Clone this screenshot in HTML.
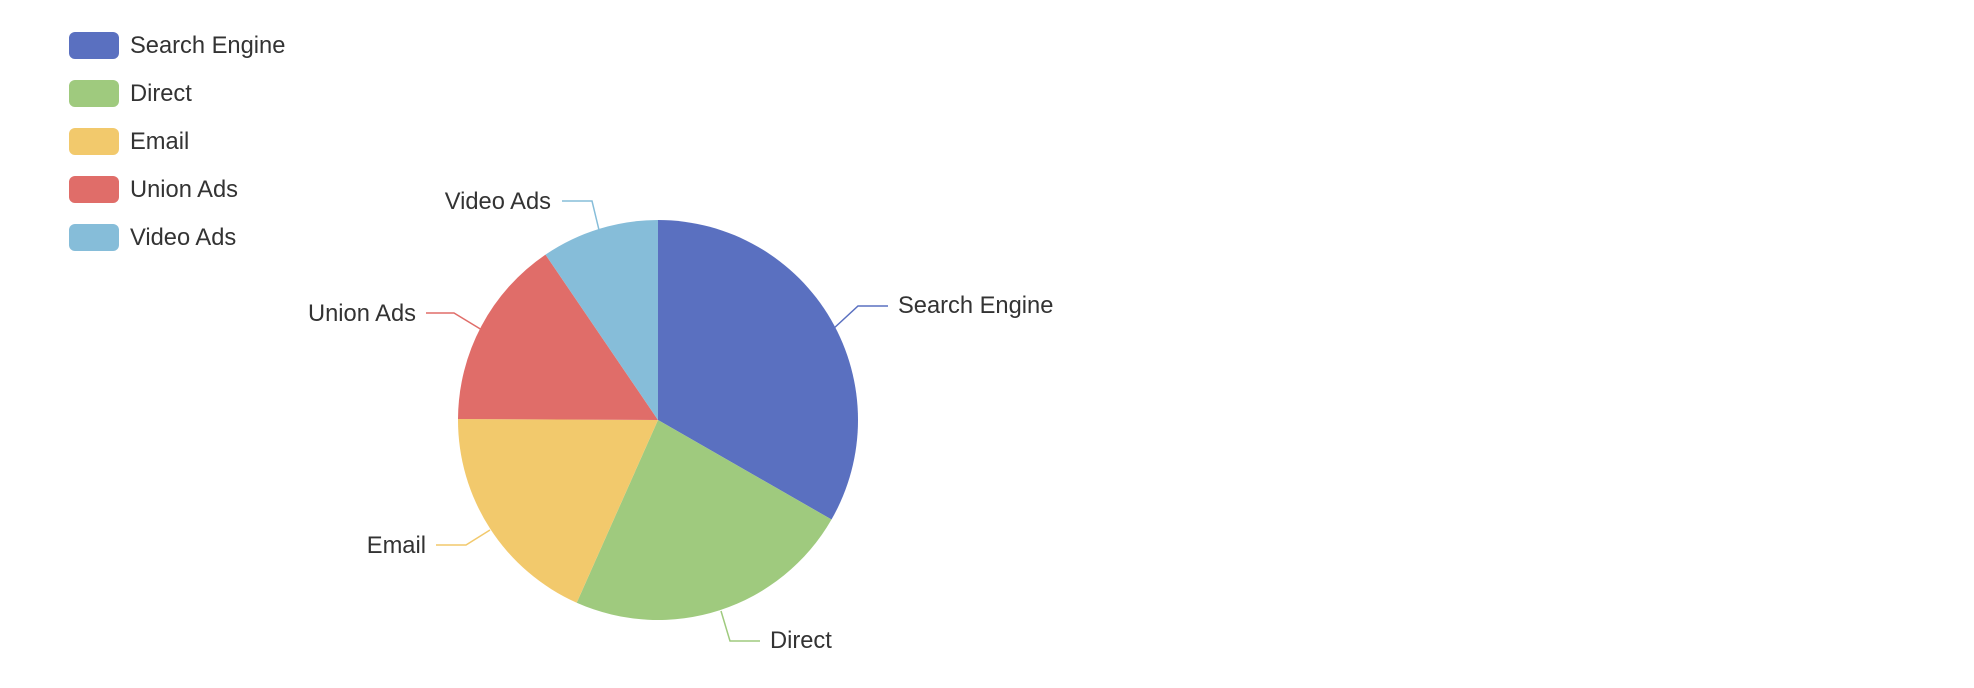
<!DOCTYPE html>
<html><head><meta charset="utf-8"><style>
html,body{margin:0;padding:0;background:#fff;width:1974px;height:688px;overflow:hidden}
text{font-family:"Liberation Sans",sans-serif;font-size:23.7px;fill:#333}
</style></head><body>
<svg width="1974" height="688" viewBox="0 0 1974 688" xmlns="http://www.w3.org/2000/svg">
<g>
<rect x="69" y="32" width="50" height="27" rx="6" fill="#5a70c0"/>
<text x="130" y="53">Search Engine</text>
<rect x="69" y="80" width="50" height="27" rx="6" fill="#9fca7e"/>
<text x="130" y="101">Direct</text>
<rect x="69" y="128" width="50" height="27" rx="6" fill="#f2c96c"/>
<text x="130" y="149">Email</text>
<rect x="69" y="176" width="50" height="27" rx="6" fill="#e06d69"/>
<text x="130" y="197">Union Ads</text>
<rect x="69" y="224" width="50" height="27" rx="6" fill="#86bdd9"/>
<text x="130" y="245">Video Ads</text>
</g>
<g transform="translate(658,420)">
<path d="M0,0 L0,-200 A200,200 0 0 1 173.5,99.5 Z" fill="#5a70c0"/>
<path d="M0,0 L173.5,99.5 A200,200 0 0 1 -81.3,182.7 Z" fill="#9fca7e"/>
<path d="M0,0 L-81.3,182.7 A200,200 0 0 1 -200,-1 Z" fill="#f2c96c"/>
<path d="M0,0 L-200,-1 A200,200 0 0 1 -112.5,-165.4 Z" fill="#e06d69"/>
<path d="M0,0 L-112.5,-165.4 A200,200 0 0 1 0,-200 Z" fill="#86bdd9"/>
</g>
<g fill="none" stroke-width="1.5">
<polyline points="832,330 858,306 888,306" stroke="#5a70c0"/>
<polyline points="721,611 730,641 760,641" stroke="#9fca7e"/>
<polyline points="490,530 466,545 436,545" stroke="#f2c96c"/>
<polyline points="482,330 454,313 426,313" stroke="#e06d69"/>
<polyline points="599,230 592,201 562,201" stroke="#86bdd9"/>
</g>
<text x="898" y="313">Search Engine</text>
<text x="770" y="648">Direct</text>
<text x="426" y="553" text-anchor="end">Email</text>
<text x="416" y="321" text-anchor="end">Union Ads</text>
<text x="551" y="209" text-anchor="end">Video Ads</text>
</svg>
</body></html>
